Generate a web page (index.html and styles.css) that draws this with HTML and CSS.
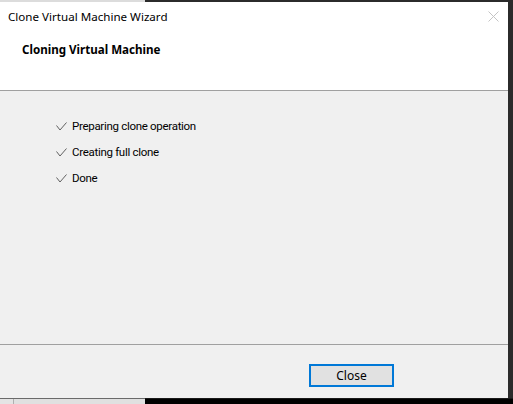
FILE: index.html
```html
<!DOCTYPE html>
<html>
<head>
<meta charset="utf-8">
<link rel="stylesheet" href="styles.css">
</head>
<body>
<div class="screen">
  <div class="top-strip"><div class="ts-light"></div><div class="ts-dark"></div></div>
  <div class="mid">
    <div class="dialog">
      <div class="header">
        <div class="titlebar">
          <span class="title">Clone Virtual Machine Wizard</span>
          <svg class="close-x" width="11" height="11" viewBox="0 0 11 11"><path d="M0.5 0.5 L10.5 10.5 M10.5 0.5 L0.5 10.5" stroke="#c4c4c4" stroke-width="1" fill="none"/></svg>
        </div>
        <div class="subtitle">Cloning Virtual Machine</div>
      </div>
      <div class="content">
        <ul class="steps">
          <li><svg class="check" width="11" height="9" viewBox="0 0 11 9"><path d="M0.5 3.5 L4 8 L10.5 0.5" stroke="#606060" stroke-width="1" fill="none"/></svg><span>Preparing clone operation</span></li>
          <li><svg class="check" width="11" height="9" viewBox="0 0 11 9"><path d="M0.5 3.5 L4 8 L10.5 0.5" stroke="#606060" stroke-width="1" fill="none"/></svg><span>Creating full clone</span></li>
          <li><svg class="check" width="11" height="9" viewBox="0 0 11 9"><path d="M0.5 3.5 L4 8 L10.5 0.5" stroke="#606060" stroke-width="1" fill="none"/></svg><span>Done</span></li>
        </ul>
      </div>
      <div class="footer">
        <button class="btn">Close</button>
      </div>
    </div>
    <div class="right-dark"></div>
  </div>
  <div class="bottom-strip">
    <div class="bs-light"><div class="bs-a"></div><div class="bs-b"></div></div>
    <div class="bs-dark"></div>
  </div>
</div>
</body>
</html>
```
FILE: styles.css
```css
* { box-sizing: border-box; }
html, body { margin: 0; padding: 0; }
body {
  width: 513px;
  height: 404px;
  overflow: hidden;
  font-family: "Noto Sans", "Open Sans", sans-serif;
  font-size: 12px;
  color: #000;
  background: #2b2b2b;
}
.screen { display: flex; flex-direction: column; width: 513px; height: 404px; }
.top-strip { display: flex; height: 2px; }
.ts-light { width: 145px; background: #dcdcdc; }
.ts-dark { flex: 1; background: #2b2b2b; }
.mid { display: flex; height: 396px; }
.dialog { width: 508px; display: flex; flex-direction: column; background: #f0f0f0; }
.right-dark { flex: 1; background: #2b2b2b; }
.header {
  height: 89px;
  background: #fff;
  border-bottom: 1px solid #a0a0a0;
}
.titlebar {
  height: 30px;
  display: flex;
  align-items: center;
  justify-content: space-between;
  padding: 0 9px 0 8px;
}
.title { font-size: 11.6px; line-height: 16px; }
.close-x { display: block; margin-top: -2px; }
.subtitle {
  padding-left: 22px;
  margin-top: 10px;
  font-weight: bold;
  font-size: 11.6px;
  line-height: 16px;
}
.content {
  flex: 1;
  border-bottom: 1px solid #a0a0a0;
  padding: 27px 0 0 56px;
}
.steps {
  list-style: none;
  margin: 0;
  padding: 0;
  display: flex;
  flex-direction: column;
  gap: 10px;
  font-family: Roboto, "Noto Sans", sans-serif;
  font-size: 11.5px;
  letter-spacing: -0.3px;
}
.steps li { display: flex; align-items: center; height: 16px; line-height: 16px; }
.check { display: block; margin-right: 5px; margin-top: 1px; }
.footer {
  height: 53px;
  display: flex;
  justify-content: flex-end;
  align-items: flex-start;
  padding: 19px 114px 0 0;
}
.btn {
  width: 85px;
  height: 23px;
  border: 2px solid #0078d7;
  background: #e1e1e1;
  font-family: inherit;
  font-size: 12px;
  color: #000;
  padding: 0;
  margin: 0;
}
.bottom-strip { display: flex; height: 6px; }
.bs-light { width: 145px; display: flex; border-top: 1px solid #6a6a6a; }
.bs-a { width: 14px; background: #e4e4e4; border-right: 1px solid #b0b0b0; }
.bs-b { flex: 1; background: #e0e0e0; }
.bs-dark { flex: 1; background: #000; border-top: 1px solid #1a1a1a; }
```
